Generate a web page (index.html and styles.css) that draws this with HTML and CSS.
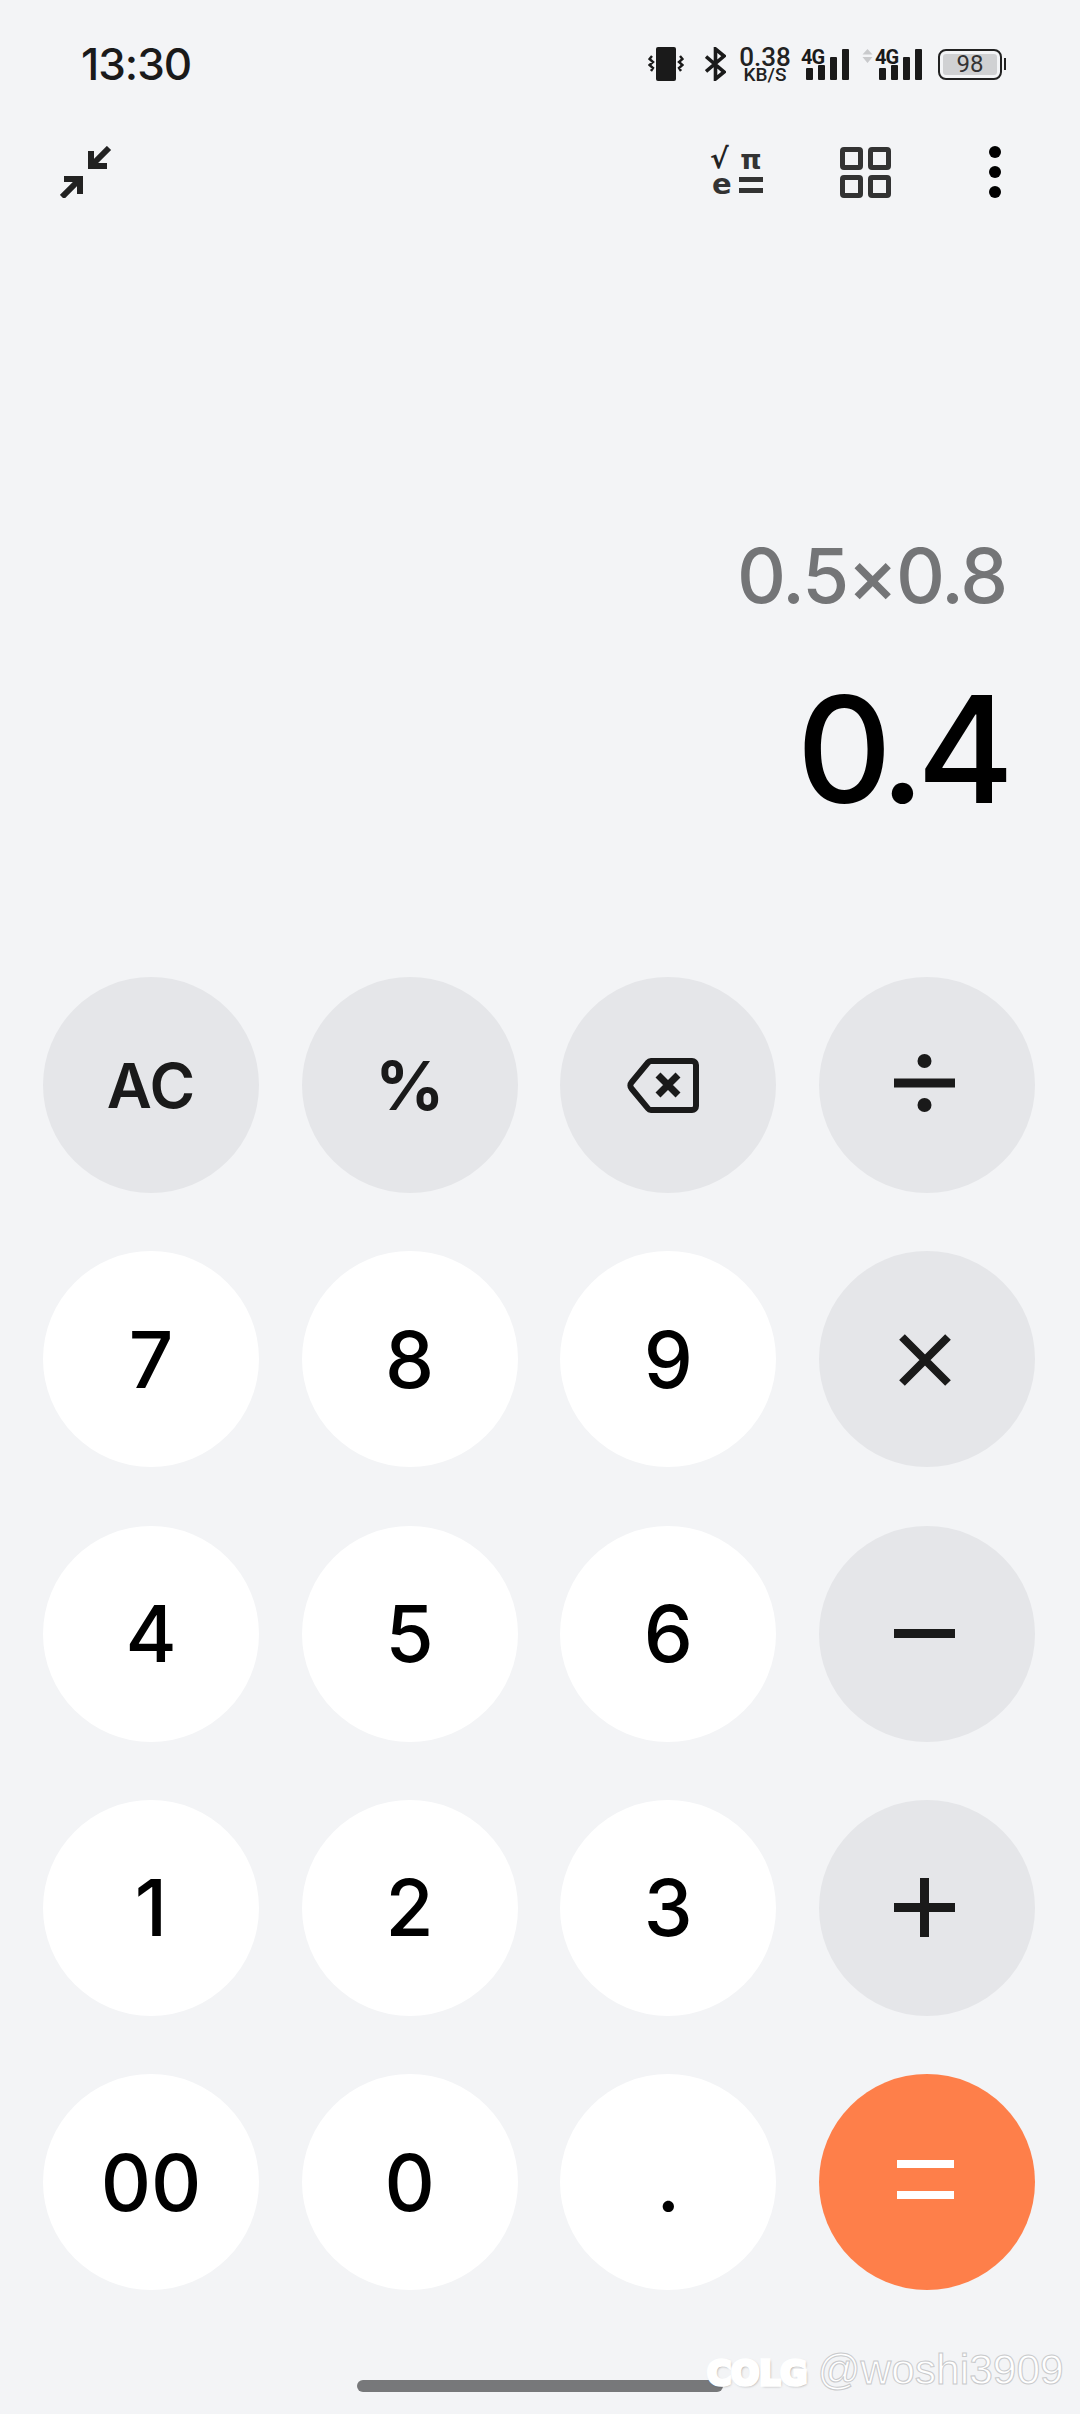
FILE: index.html
```html
<!DOCTYPE html>
<html lang="en">
<head>
  <meta charset="UTF-8">
  <title>Calculator</title>
  <link rel="stylesheet" href="styles.css">
</head>
<body>
  <div class="statusbar">
    <span class="time">13:30</span>
    <div class="status-icons">
      <svg class="ic-vibrate" width="36" height="36" viewBox="0 0 36 36">
        <rect x="8" y="1" width="20" height="34" rx="2" fill="#1a1a1a"/>
        <path d="M4 10l-2.500 3 3.500 3-3.500 3 3.500 3-2 3M32 10l2.500 3-3.500 3 3.500 3-3.500 3 2 3" fill="none" stroke="#1a1a1a" stroke-width="2.400"/>
      </svg>
      <svg class="ic-bt" width="21" height="34" viewBox="0 0 21 34">
        <path d="M1 9.500l18 15.500-8.500 7V2l8.500 7L1 24.500" fill="none" stroke="#1a1a1a" stroke-width="3.600"/>
      </svg>
      <div class="speed">
        <span class="speed-num">0.38</span>
        <span class="speed-unit">KB/S</span>
      </div>
      <div class="signal">
        <span class="net">4G</span>
        <span class="bar b1"></span><span class="bar b2"></span><span class="bar b3"></span><span class="bar b4"></span>
      </div>
      <div class="signal second">
        <svg class="updown" width="11" height="14" viewBox="0 0 11 14"><path d="M5.500 0l5 5.500H.5zM5.500 14l5-6H.5z" fill="#c9cacc"/></svg>
        <span class="net">4G</span>
        <span class="bar b1"></span><span class="bar b2"></span><span class="bar b3"></span><span class="bar b4"></span>
      </div>
      <div class="battery">
        <div class="battery-body"><span class="battery-level">98</span></div>
        <span class="battery-nub"></span>
      </div>
    </div>
  </div>

  <div class="toolbar">
    <svg width="52" height="52" viewBox="0 0 52 52">
      <g fill="none" stroke="#222" stroke-width="6">
        <path d="M31 5V20H47M31 20L49 2"/>
        <path d="M4 33H20V48M20 33L2 51"/>
      </g>
    </svg>
    <div class="tools-right">
      <div class="sci">
        <span class="sci-root">√</span><span class="sci-pi">π</span>
        <span class="sci-e">e</span><span class="sci-eq"></span>
      </div>
      <div class="grid-icon"><i></i><i></i><i></i><i></i></div>
      <div class="dots"><i></i><i></i><i></i></div>
    </div>
  </div>

  <div class="display">
    <div class="expr">0.5×0.8</div>
    <div class="result">0.4</div>
  </div>

  <div class="keypad">
    <button class="key op txt">AC</button>
    <button class="key op txt pct">%</button>
    <button class="key op">
      <svg class="ic-back" width="72" height="55" viewBox="0 0 72 55">
        <path d="M24 3H65a4 4 0 0 1 4 4v41a4 4 0 0 1-4 4H24a4 4 0 0 1-3-1.500L4.500 30.500a4.500 4.500 0 0 1 0-6L21 4.500A4 4 0 0 1 24 3z" fill="none" stroke="#1a1a1a" stroke-width="6"/>
        <path d="M31 17l20 20M51 17L31 37" stroke="#1a1a1a" stroke-width="7"/>
      </svg>
    </button>
    <button class="key op">
      <svg class="ic-op ic-div" width="61" height="58" viewBox="0 0 61 58">
        <circle cx="30.500" cy="7" r="7" fill="#1a1a1a"/>
        <rect x="0" y="24.500" width="61" height="9" fill="#1a1a1a"/>
        <circle cx="30.500" cy="51" r="7" fill="#1a1a1a"/>
      </svg>
    </button>

    <button class="key">7</button>
    <button class="key">8</button>
    <button class="key">9</button>
    <button class="key op">
      <svg class="ic-op ic-times" width="52" height="52" viewBox="0 0 52 52"><path d="M3 3l46 46M49 3L3 49" stroke="#1a1a1a" stroke-width="8"/></svg>
    </button>

    <button class="key">4</button>
    <button class="key">5</button>
    <button class="key">6</button>
    <button class="key op">
      <svg class="ic-op" width="61" height="9" viewBox="0 0 61 9"><rect width="61" height="9" fill="#1a1a1a"/></svg>
    </button>

    <button class="key">1</button>
    <button class="key">2</button>
    <button class="key">3</button>
    <button class="key op">
      <svg class="ic-op" width="61" height="59" viewBox="0 0 61 59"><path d="M0 29.500h61M30.500 0v59" stroke="#1a1a1a" stroke-width="9"/></svg>
    </button>

    <button class="key">00</button>
    <button class="key">0</button>
    <button class="key">.</button>
    <button class="key equals">
      <svg class="ic-eq" width="57" height="39" viewBox="0 0 57 39"><path d="M0 4h57M0 35h57" stroke="#fff" stroke-width="8"/></svg>
    </button>
  </div>

  <div class="homebar"></div>
  <div class="watermark"><span class="wm-logo">COLG</span><span class="wm-user">@woshi3909</span></div>
</body>
</html>
```

FILE: styles.css
```css
:root {
  --background: #f3f4f6;
  --op-bg: #e5e6e9;
  --text: #1a1a1a;
  --orange: #fe7f4a;
}
* {
  box-sizing: border-box;
}
body {
  position: relative;
  width: 1080px;
  height: 2414px;
  margin: 0;
  overflow: hidden;
  background: var(--background);
  color: var(--text);
  font-family: Inter, "Liberation Sans", sans-serif;
}

/* status bar */
.statusbar {
  display: flex;
  justify-content: space-between;
  align-items: center;
  height: 60px;
  margin-top: 34px;
  padding: 0 74px 0 81px;
}
.time {
  font-size: 44px;
  font-weight: 500;
  letter-spacing: -1px;
}
.status-icons {
  display: flex;
  align-items: center;
}
.ic-vibrate { margin-right: 21px; }
.ic-bt { margin-right: 14px; }
.speed {
  display: flex;
  flex-direction: column;
  align-items: center;
  width: 50px;
  margin-right: 11px;
  font-family: Roboto, sans-serif;
  color: #222;
}
.speed-num {
  font-size: 26px;
  line-height: 22px;
  font-weight: 500;
}
.speed-unit {
  font-size: 19px;
  line-height: 14px;
  font-weight: 500;
}
.signal {
  display: flex;
  justify-content: flex-end;
  align-items: flex-end;
  position: relative;
  gap: 5px;
  width: 48px;
  height: 31px;
  margin-right: 13px;
}
.signal.second {
  width: 60px;
  margin-right: 16px;
}
.net {
  position: absolute;
  top: -4px;
  left: 0;
  font-family: Roboto, sans-serif;
  font-size: 20px;
  font-weight: 700;
  letter-spacing: -1px;
}
.second .net { left: 13px; }
.updown {
  position: absolute;
  top: 0;
  left: 0;
}
.bar {
  width: 7px;
  background: var(--text);
  border-radius: 1px;
}
.b1 { height: 12px; }
.b2 { height: 15px; }
.b3 { height: 23px; }
.b4 { height: 31px; }
.battery {
  display: flex;
  align-items: center;
  gap: 2px;
}
.battery-body {
  width: 64px;
  height: 31px;
  padding: 3px;
  border: 2px solid #222;
  border-radius: 8px;
}
.battery-level {
  display: block;
  height: 100%;
  background: #d0d1d3;
  border-radius: 3px;
  font-family: Roboto, sans-serif;
  font-size: 24px;
  line-height: 21px;
  text-align: center;
  color: #333;
}
.battery-nub {
  width: 2px;
  height: 12px;
  background: #222;
}

/* toolbar */
.toolbar {
  display: flex;
  justify-content: space-between;
  align-items: center;
  height: 84px;
  margin-top: 36px;
  padding: 0 79px 0 60px;
}
.tools-right {
  display: flex;
  align-items: center;
}
.sci {
  display: grid;
  grid-template-columns: 29px 24px;
  grid-template-rows: 25px 25px;
  width: 53px;
  height: 50px;
  margin-right: 77px;
  font-family: "DejaVu Sans", sans-serif;
  font-weight: 700;
  color: #333;
  text-align: center;
}
.sci-root { font-size: 28px; line-height: 24px; color: #222; text-align: left; }
.sci-pi { font-size: 27px; line-height: 25px; }
.sci-e { font-size: 29px; line-height: 24px; text-align: left; padding-left: 2px; }
.sci-eq {
  align-self: center;
  height: 16px;
  border-top: 5px solid #333;
  border-bottom: 5px solid #333;
}
.grid-icon {
  display: grid;
  grid-template-columns: 23px 23px;
  gap: 5px;
  margin-right: 98px;
}
.grid-icon i {
  height: 23px;
  border: 5px solid #333;
  border-radius: 4px;
}
.dots {
  display: flex;
  flex-direction: column;
  gap: 8px;
}
.dots i {
  width: 12px;
  height: 12px;
  border-radius: 50%;
  background: #000;
}

/* display */
.display {
  display: flex;
  flex-direction: column;
  align-items: flex-end;
  height: 763px;
  padding: 316px 74px 0 0;
}
.expr {
  font-size: 76px;
  line-height: 90px;
  font-weight: 500;
  letter-spacing: -2px;
  color: #747577;
}
.result {
  margin-top: 50px;
  font-size: 148px;
  line-height: 160px;
  font-weight: 500;
  letter-spacing: -8px;
  color: #000;
}

/* keys */
.keypad {
  display: grid;
  grid-template-columns: repeat(4, 216px);
  grid-auto-rows: 216px;
  column-gap: 42.67px;
  row-gap: 58.25px;
  padding-left: 43px;
}
.key {
  display: flex;
  align-items: center;
  justify-content: center;
  padding: 0;
  border: none;
  border-radius: 50%;
  background: #fff;
  font-family: inherit;
  font-size: 78px;
  font-weight: 500;
  color: #000;
}
.key.op {
  background: var(--op-bg);
}
.key.txt {
  font-size: 62px;
  font-weight: 600;
  color: var(--text);
}
.key.pct {
  font-size: 68px;
  font-weight: 700;
}
.key.equals {
  background: var(--orange);
}
.ic-back {
  margin-right: 10px;
}
.ic-op {
  margin-right: 4px;
  margin-bottom: 1px;
}
.ic-div {
  margin-bottom: 4px;
}
.ic-times {
  margin-bottom: 0;
  margin-top: 2px;
}
.ic-eq {
  margin-right: 3px;
  margin-bottom: 5px;
}

/* overlays */
.homebar {
  position: absolute;
  left: 357px;
  top: 2380px;
  width: 366px;
  height: 12px;
  border-radius: 6px;
  background: #77787a;
}
.watermark {
  position: absolute;
  left: 707px;
  top: 2346px;
  display: flex;
  align-items: center;
  gap: 10px;
}
.wm-logo {
  margin-top: 6px;
  font-family: "DejaVu Sans", sans-serif;
  font-size: 33px;
  font-weight: 700;
  letter-spacing: 0;
  color: #fff;
  -webkit-text-stroke: 3.5px #fff;
  text-shadow: 1px 1px 3px rgba(0,0,0,0.6);
}
.wm-user {
  font-family: "Liberation Sans", sans-serif;
  font-size: 42.5px;
  color: #fff;
  -webkit-text-stroke: 1px #c9cacc;
}
```
